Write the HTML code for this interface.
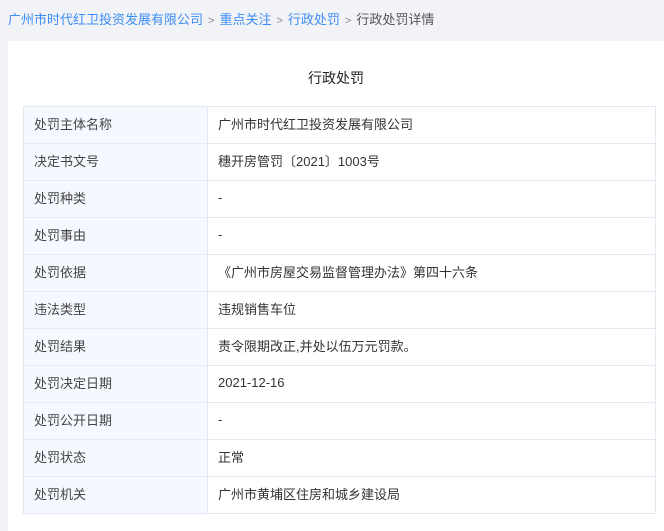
<!DOCTYPE html>
<html><head><meta charset="utf-8"><style>
*{margin:0;padding:0;box-sizing:border-box}
body{width:664px;height:521px;background:#f2f3f7;font-family:"Liberation Sans","Noto Sans CJK SC",sans-serif;font-size:13px;color:#333;overflow:hidden;position:relative}
.bc{position:absolute;left:8px;top:9px;font-size:13px;color:#555}
.bc a{color:#3d8ef5;text-decoration:none}
.bc span.s{color:#888;margin:0 5px;font-size:11px}
.card{position:absolute;left:8px;top:41px;width:656px;height:490px;background:#fff}
.t{position:absolute;left:0;width:656px;top:27px;text-align:center;font-size:14px;color:#222}
table{position:absolute;left:15px;top:65px;width:633px;border-collapse:collapse}
td{border:1px solid #e4e9f3;height:37px;padding:0 10px 4px;vertical-align:middle}
td.l{width:184px;background:#f5f8fe;color:#444}
</style></head><body>
<div class="bc"><a>广州市时代红卫投资发展有限公司</a><span class="s">&gt;</span><a>重点关注</a><span class="s">&gt;</span><a>行政处罚</a><span class="s">&gt;</span>行政处罚详情</div>
<div class="card"><div class="t">行政处罚</div>
<table>
<tr><td class="l">处罚主体名称</td><td>广州市时代红卫投资发展有限公司</td></tr>
<tr><td class="l">决定书文号</td><td>穗开房管罚〔2021〕1003号</td></tr>
<tr><td class="l">处罚种类</td><td>-</td></tr>
<tr><td class="l">处罚事由</td><td>-</td></tr>
<tr><td class="l">处罚依据</td><td>《广州市房屋交易监督管理办法》第四十六条</td></tr>
<tr><td class="l">违法类型</td><td>违规销售车位</td></tr>
<tr><td class="l">处罚结果</td><td>责令限期改正,并处以伍万元罚款。</td></tr>
<tr><td class="l">处罚决定日期</td><td>2021-12-16</td></tr>
<tr><td class="l">处罚公开日期</td><td>-</td></tr>
<tr><td class="l">处罚状态</td><td>正常</td></tr>
<tr><td class="l">处罚机关</td><td>广州市黄埔区住房和城乡建设局</td></tr>
</table></div>
</body></html>
